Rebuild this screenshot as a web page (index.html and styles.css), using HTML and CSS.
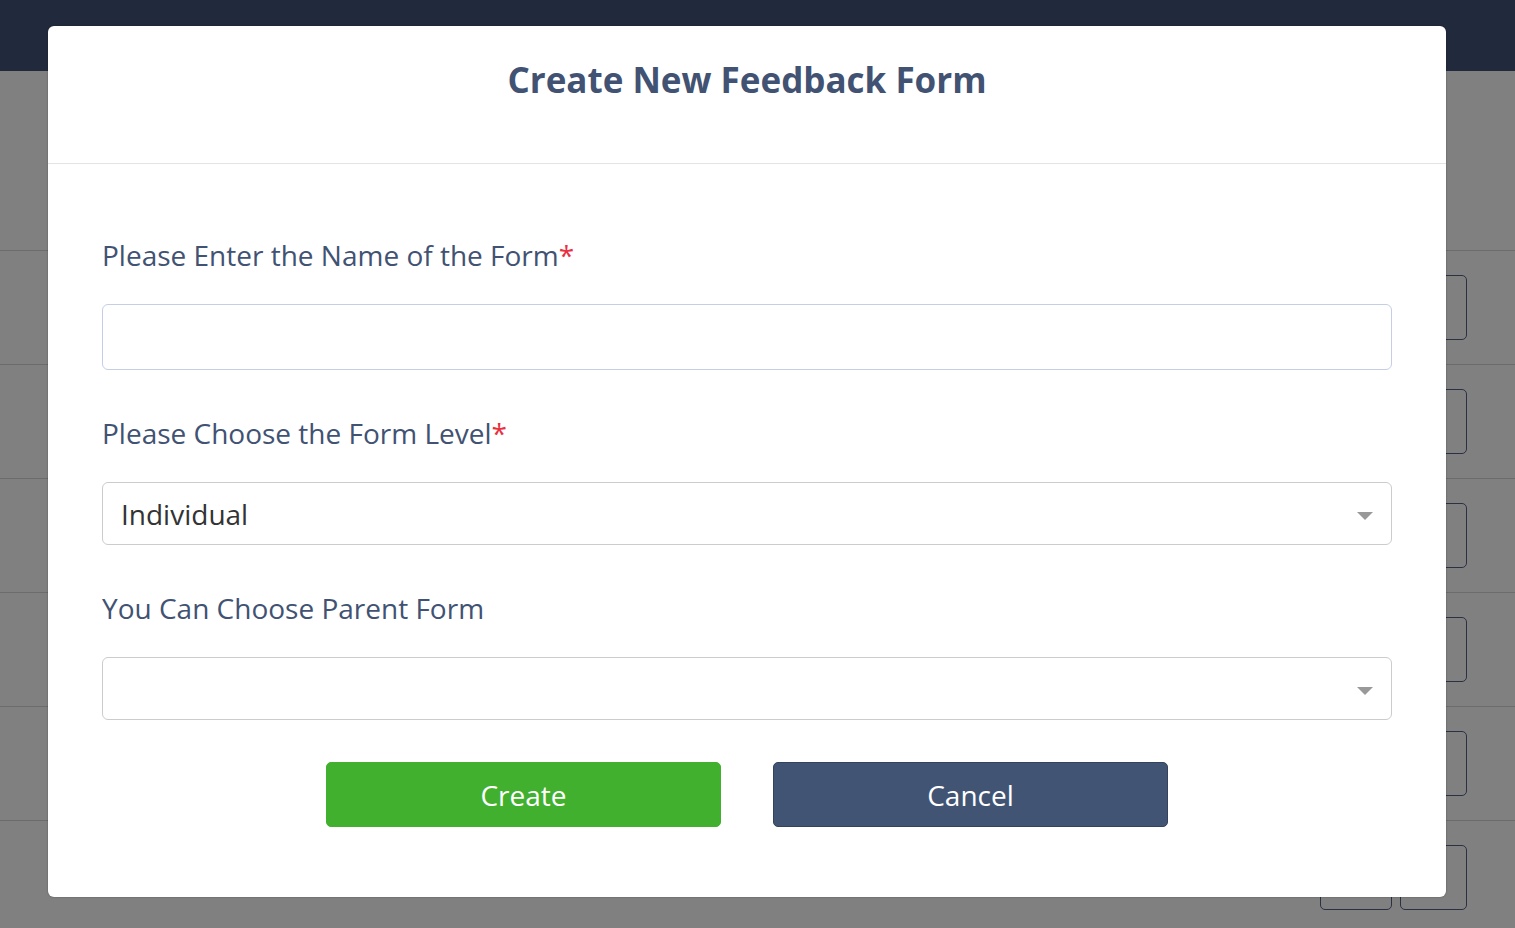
FILE: index.html
```html
<!DOCTYPE html>
<html>
<head>
<meta charset="utf-8">
<link rel="stylesheet" href="styles.css">
</head>
<body>
<div class="page">
  <div class="navbar"></div>
  <div class="content">
    <div class="content-head"></div>
    <div class="row"><span class="rbtn"></span><span class="rbtn"></span></div>
    <div class="row"><span class="rbtn"></span><span class="rbtn"></span></div>
    <div class="row"><span class="rbtn"></span><span class="rbtn"></span></div>
    <div class="row"><span class="rbtn"></span><span class="rbtn"></span></div>
    <div class="row"><span class="rbtn"></span><span class="rbtn"></span></div>
    <div class="row"><span class="rbtn"></span><span class="rbtn"></span></div>
  </div>
</div>

<div class="modal">
  <div class="modal-header">
    <h1 class="modal-title">Create New Feedback Form</h1>
  </div>
  <div class="modal-body">
    <label class="field-label">Please Enter the Name of the Form<span class="req">*</span></label>
    <div class="text-input"></div>

    <label class="field-label gap">Please Choose the Form Level<span class="req">*</span></label>
    <div class="select">
      <span class="select-value">Individual</span>
      <span class="caret"></span>
    </div>

    <label class="field-label gap">You Can Choose Parent Form</label>
    <div class="select">
      <span class="select-value"></span>
      <span class="caret"></span>
    </div>

    <div class="actions">
      <button class="btn btn-create">Create</button>
      <button class="btn btn-cancel">Cancel</button>
    </div>
  </div>
</div>
</body>
</html>
```

FILE: styles.css
```css
* { box-sizing: border-box; }
html, body {
  margin: 0;
  padding: 0;
  width: 1515px;
  height: 928px;
  overflow: hidden;
  font-family: "Open Sans", "Noto Sans", sans-serif;
  background: #808080;
}
.page {
  display: flex;
  flex-direction: column;
  height: 928px;
}
.navbar {
  height: 71px;
  background: #212a3d;
  flex: none;
}
.content {
  flex: 1;
  background: #808080;
}
.content-head {
  height: 179px;
}
.row {
  height: 114px;
  border-top: 1px solid #6c6c6c;
  display: flex;
  justify-content: flex-end;
  align-items: flex-start;
  gap: 8px;
  padding: 24px 48px 0 0;
}
.rbtn {
  display: block;
  height: 65px;
  border: 1px solid #2a3142;
  border-radius: 5px;
}
.rbtn:first-child { width: 72px; }
.rbtn:last-child { width: 67px; }

.modal {
  position: absolute;
  top: 26px;
  left: 48px;
  width: 1398px;
  height: 871px;
  background: #fff;
  border-radius: 6px;
  box-shadow: 0 0 2px rgba(0,0,0,0.35);
  display: flex;
  flex-direction: column;
}
.modal-header {
  height: 138px;
  border-bottom: 1px solid #e3e3e3;
  padding-top: 32px;
  text-align: center;
}
.modal-title {
  margin: 0;
  font-size: 35px;
  line-height: 43px;
  font-weight: 700;
  color: #415273;
}
.modal-body {
  display: flex;
  flex-direction: column;
  padding: 70px 54px 0 54px;
}
.field-label {
  font-size: 28px;
  line-height: 42px;
  color: #415273;
  margin-bottom: 28px;
}
.field-label.gap { margin-top: 42px; }
.req { color: #e8303f; }
.text-input {
  height: 66px;
  border: 1px solid #c4cfe5;
  border-radius: 6px;
}
.select {
  height: 63px;
  border: 1px solid #cccccc;
  border-radius: 6px;
  display: flex;
  align-items: center;
  justify-content: space-between;
  padding: 0 18px 0 18px;
}
.select-value {
  font-size: 28px;
  color: #333;
  line-height: 40px;
}
.caret {
  width: 0;
  height: 0;
  border-left: 8px solid transparent;
  border-right: 8px solid transparent;
  border-top: 8px solid #999;
  margin-top: 4px;
}
.actions {
  display: flex;
  justify-content: center;
  gap: 52px;
  margin-top: 42px;
}
.btn {
  width: 395px;
  height: 65px;
  border-radius: 5px;
  font-family: "Open Sans", "Noto Sans", sans-serif;
  font-size: 28px;
  color: #fff;
  border: 1px solid transparent;
  padding: 0;
  cursor: pointer;
}
.btn-create { background: #41b02f; border-color: #41b02f; }
.btn-cancel { background: #425473; border-color: #34435d; }
```
